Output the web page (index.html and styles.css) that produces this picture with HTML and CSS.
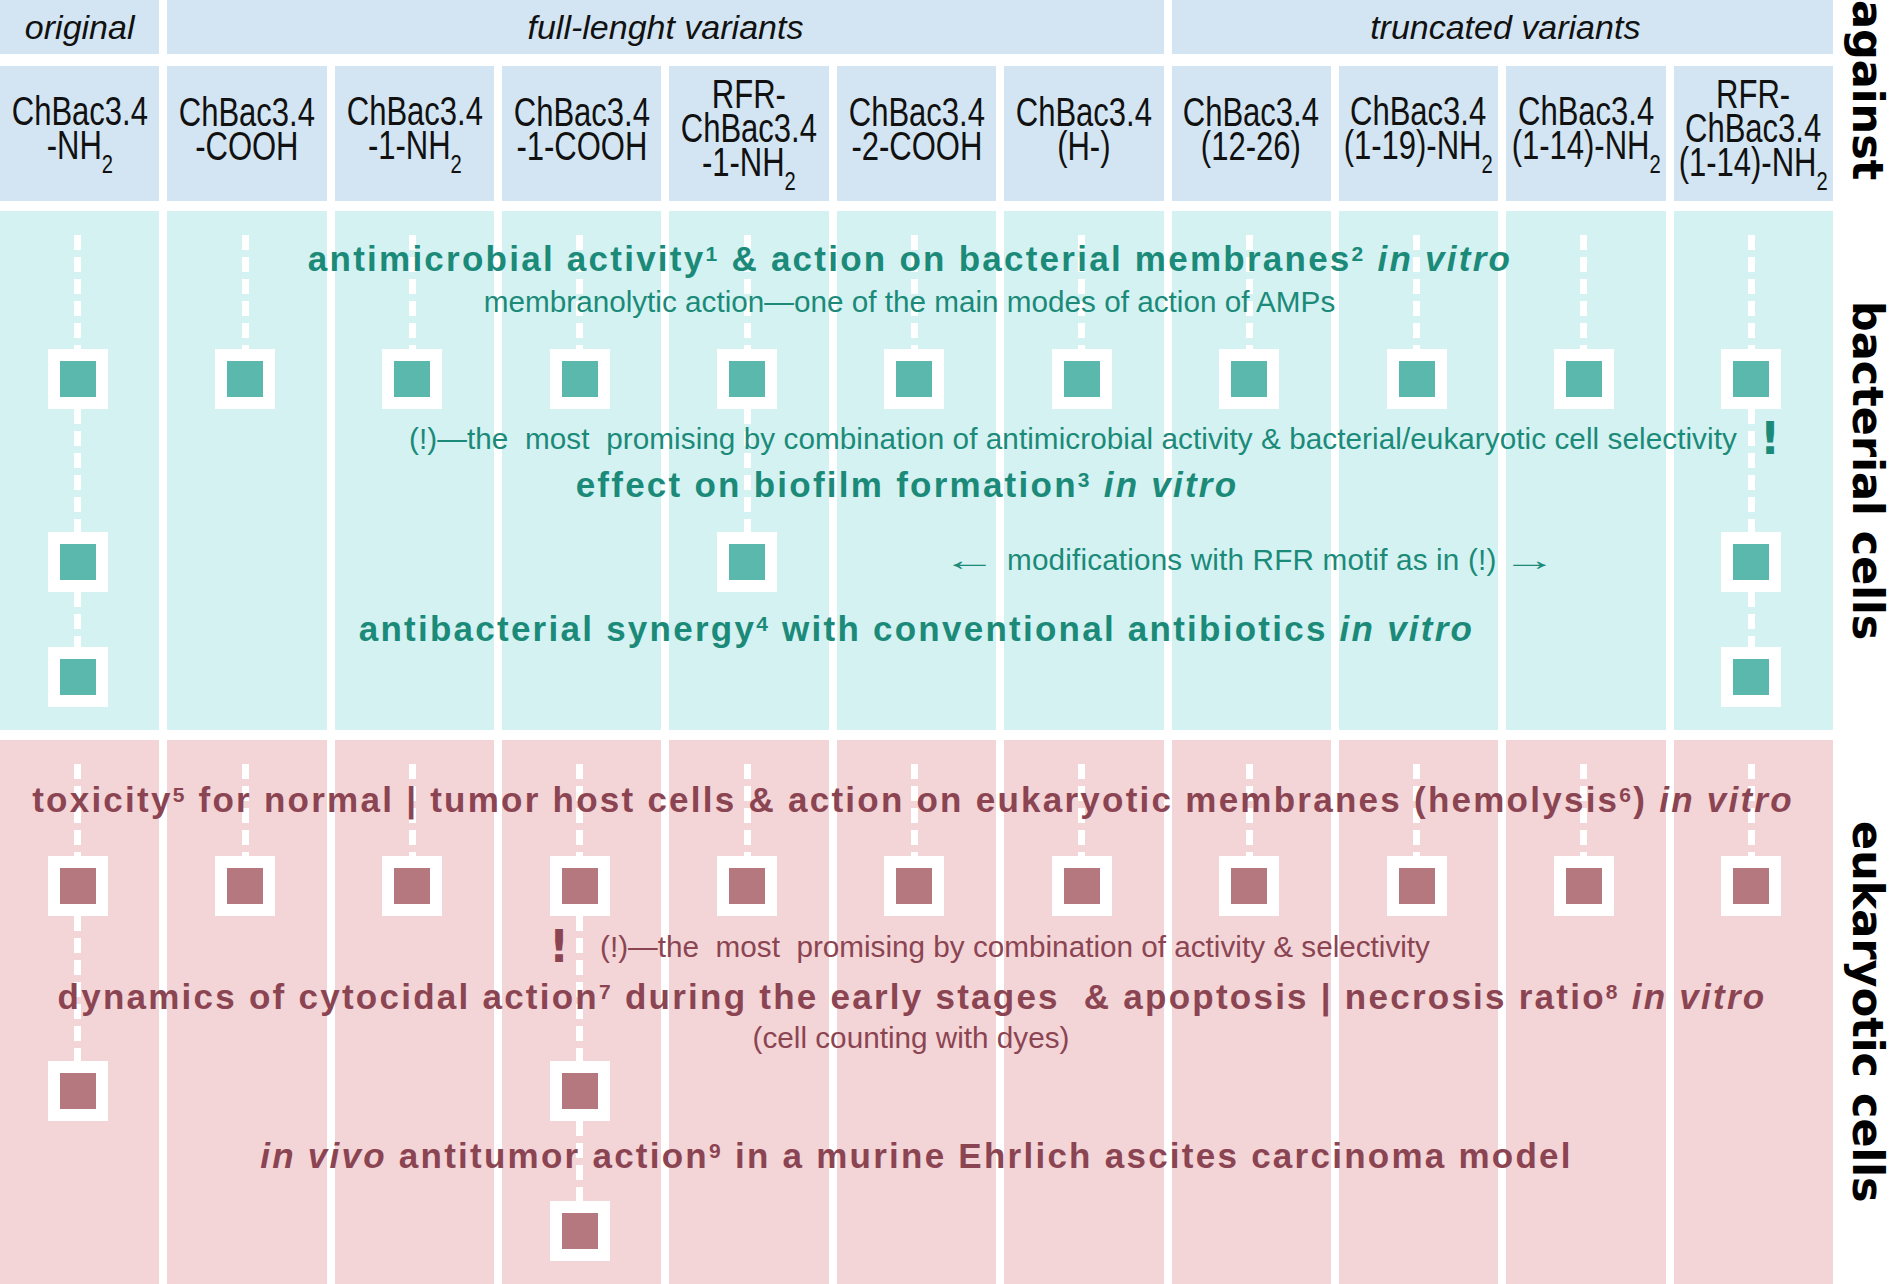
FILE: index.html
```html
<!DOCTYPE html>
<html lang="en">
<head>
<meta charset="utf-8">
<title>ChBac3.4 variants</title>
<link rel="stylesheet" href="styles.css">
</head>
<body>
<div class="figure">
  <div class="head">
    <div class="hdr1">
      <div class="hcell">original</div>
      <div class="hcell span6">full-lenght variants</div>
      <div class="hcell span4">truncated variants</div>
    </div>
    <div class="hdr2">
      <div class="pcell"><span>ChBac3.4<br>-NH<sub>2</sub></span></div>
      <div class="pcell"><span>ChBac3.4<br>-COOH</span></div>
      <div class="pcell"><span>ChBac3.4<br>-1-NH<sub>2</sub></span></div>
      <div class="pcell"><span>ChBac3.4<br>-1-COOH</span></div>
      <div class="pcell"><span>RFR-<br>ChBac3.4<br>-1-NH<sub>2</sub></span></div>
      <div class="pcell"><span>ChBac3.4<br>-2-COOH</span></div>
      <div class="pcell"><span>ChBac3.4<br>(H-)</span></div>
      <div class="pcell"><span>ChBac3.4<br>(12-26)</span></div>
      <div class="pcell"><span>ChBac3.4<br>(1-19)-NH<sub>2</sub></span></div>
      <div class="pcell"><span>ChBac3.4<br>(1-14)-NH<sub>2</sub></span></div>
      <div class="pcell"><span>RFR-<br>ChBac3.4<br>(1-14)-NH<sub>2</sub></span></div>
    </div>
  </div>
  <div class="side side-head"><span class="vlabel">against</span></div>

  <section class="panel teal">
    <div class="stripes"><div></div><div></div><div></div><div></div><div></div><div></div><div></div><div></div><div></div><div></div><div></div></div>
    <div class="tracks">
      <div class="track"><i class="dash lead"></i><b class="node"></b><i class="dash link1"></i><b class="node"></b><i class="dash link2"></i><b class="node"></b></div>
      <div class="track"><i class="dash lead"></i><b class="node"></b></div>
      <div class="track"><i class="dash lead"></i><b class="node"></b></div>
      <div class="track"><i class="dash lead"></i><b class="node"></b></div>
      <div class="track"><i class="dash lead"></i><b class="node"></b><i class="dash link1"></i><b class="node"></b></div>
      <div class="track"><i class="dash lead"></i><b class="node"></b></div>
      <div class="track"><i class="dash lead"></i><b class="node"></b></div>
      <div class="track"><i class="dash lead"></i><b class="node"></b></div>
      <div class="track"><i class="dash lead"></i><b class="node"></b></div>
      <div class="track"><i class="dash lead"></i><b class="node"></b></div>
      <div class="track"><i class="dash lead"></i><b class="node"></b><i class="dash link1"></i><b class="node"></b><i class="dash link2"></i><b class="node"></b></div>
    </div>
    <div class="notes">
      <p class="big t1">antimicrobial activity<sup>1</sup> &amp; action on bacterial membranes<sup>2</sup> <em>in vitro</em></p>
      <p class="small t2">membranolytic action—one of the main modes of action of AMPs</p>
      <p class="small t3">(!)—the&nbsp; most&nbsp; promising by combination of antimicrobial activity &amp; bacterial/eukaryotic cell selectivity<span class="bang bang-after">!</span></p>
      <p class="big t4">effect on biofilm formation<sup>3</sup> <em>in vitro</em></p>
      <p class="small t5"><span class="arr arr-l">←</span>modifications with RFR motif as in (!)<span class="arr arr-r">→</span></p>
      <p class="big t6">antibacterial synergy<sup>4</sup> with conventional antibiotics <em>in vitro</em></p>
    </div>
  </section>
  <div class="side"><span class="vlabel">bacterial cells</span></div>

  <section class="panel pink">
    <div class="stripes"><div></div><div></div><div></div><div></div><div></div><div></div><div></div><div></div><div></div><div></div><div></div></div>
    <div class="tracks">
      <div class="track"><i class="dash lead"></i><b class="node"></b><i class="dash link1"></i><b class="node"></b></div>
      <div class="track"><i class="dash lead"></i><b class="node"></b></div>
      <div class="track"><i class="dash lead"></i><b class="node"></b></div>
      <div class="track"><i class="dash lead"></i><b class="node"></b><i class="dash link1"></i><b class="node"></b><i class="dash link2"></i><b class="node"></b></div>
      <div class="track"><i class="dash lead"></i><b class="node"></b></div>
      <div class="track"><i class="dash lead"></i><b class="node"></b></div>
      <div class="track"><i class="dash lead"></i><b class="node"></b></div>
      <div class="track"><i class="dash lead"></i><b class="node"></b></div>
      <div class="track"><i class="dash lead"></i><b class="node"></b></div>
      <div class="track"><i class="dash lead"></i><b class="node"></b></div>
      <div class="track"><i class="dash lead"></i><b class="node"></b></div>
    </div>
    <div class="notes">
      <p class="big p1">toxicity<sup>5</sup> for normal | tumor host cells &amp; action on eukaryotic membranes (hemolysis<sup>6</sup>) <em>in vitro</em></p>
      <p class="small p2"><span class="bang bang-before">!</span>(!)—the&nbsp; most&nbsp; promising by combination of activity &amp; selectivity</p>
      <p class="big p3">dynamics of cytocidal action<sup>7</sup> during the early stages&nbsp; &amp; apoptosis | necrosis ratio<sup>8</sup> <em>in vitro</em></p>
      <p class="small p4">(cell counting with dyes)</p>
      <p class="big p5"><em>in vivo</em> antitumor action<sup>9</sup> in a murine Ehrlich ascites carcinoma model</p>
    </div>
  </section>
  <div class="side"><span class="vlabel">eukaryotic cells</span></div>
</div>
</body>
</html>
```

FILE: styles.css
```css
* { box-sizing: border-box; }

html, body {
  margin: 0;
  padding: 0;
  background: #ffffff;
}

body {
  width: 1890px;
  height: 1284px;
  overflow: hidden;
  font-family: "Liberation Sans", Arial, sans-serif;
  color: #111;
}

p { margin: 0; }

.figure {
  display: grid;
  grid-template-columns: 1833px 57px;
  grid-template-rows: 201px 519px 544px;
  row-gap: 10px;
}

/* ---------- header ---------- */
.head {
  display: flex;
  flex-direction: column;
  gap: 12px;
  min-width: 0;
}

.hdr1,
.hdr2,
.stripes,
.tracks {
  display: grid;
  grid-template-columns: repeat(11, minmax(0, 1fr));
  column-gap: 8px;
}

.hdr1 { height: 54px; }

.hcell {
  background: #d3e5f2;
  display: flex;
  align-items: center;
  justify-content: center;
  font-style: italic;
  font-size: 34px;
  color: #111;
}

.span6 { grid-column: span 6; }
.span4 { grid-column: span 4; padding-left: 6px; }

.hdr2 { height: 135px; }

.pcell {
  background: #d3e5f2;
  display: flex;
  align-items: center;
  justify-content: center;
  padding-bottom: 9px;
  min-width: 0;
  overflow: visible;
}

.pcell > span {
  display: inline-block;
  text-align: center;
  font-size: 40px;
  line-height: 34px;
  white-space: nowrap;
  color: #111;
  transform: scaleX(0.775);
}

.pcell sub {
  font-size: 26px;
  line-height: 0;
  vertical-align: -14px;
}

/* ---------- side labels ---------- */
.side {
  display: flex;
  align-items: center;
  justify-content: center;
  min-width: 0;
  padding-left: 12px;
}

.side-head { padding-bottom: 20px; }

.vlabel {
  writing-mode: vertical-rl;
  font-family: "DejaVu Sans", sans-serif;
  font-weight: bold;
  font-size: 43px;
  line-height: 57px;
  color: #000;
  white-space: nowrap;
}

/* ---------- panels ---------- */
.panel {
  display: grid;
  overflow: hidden;
  min-width: 0;
}

.panel > * { grid-area: 1 / 1; min-width: 0; }

.teal .stripes > div { background: #d4f2f2; }
.pink .stripes > div { background: #f3d4d7; }

.track {
  display: flex;
  flex-direction: column;
  align-items: center;
  padding-top: 24px;
  padding-right: 4px;
}

.dash {
  display: block;
  width: 7px;
  flex: none;
  background: repeating-linear-gradient(to bottom, #ffffff 0 15px, transparent 15px 22px);
}

.node {
  display: block;
  width: 60px;
  height: 60px;
  border: 12px solid #ffffff;
  flex: none;
}

.teal .node { background: #5bb8ad; }
.pink .node { background: #b5787e; }

.teal .lead { height: 114px; }
.teal .link1 { height: 123px; }
.teal .link2 { height: 55px; }

.pink .lead { height: 92px; }
.pink .link1 { height: 145px; }
.pink .link2 { height: 80px; }

/* ---------- notes ---------- */
.notes {
  display: flex;
  flex-direction: column;
  position: relative;
  z-index: 2;
}

.teal .notes { color: #1b8a79; }
.pink .notes { color: #8b4552; }

.big {
  white-space: nowrap;
  font-weight: bold;
  font-size: 35px;
  letter-spacing: 2.25px;
  line-height: 40px;
  text-align: center;
}

.small {
  white-space: nowrap;
  font-size: 29.7px;
  line-height: 34px;
  text-align: center;
}

.notes sup {
  font-size: 0.6em;
  line-height: 0;
  vertical-align: 0.5em;
}

.notes em { font-style: italic; }

.bang {
  display: inline-block;
  font-family: "DejaVu Sans", sans-serif;
  font-weight: bold;
  font-size: 44px;
  line-height: 34px;
  vertical-align: top;
  letter-spacing: 0;
}

.bang-after { margin-left: 23px; }
.bang-before { margin-right: 31px; }

.arr {
  display: inline-block;
  width: 34px;
  transform: scaleX(1.85);
  transform-origin: 0 50%;
  letter-spacing: 0;
}

.arr-l { margin-right: 31px; }
.arr-r { margin-left: 6px; }

/* teal positions */
.t1 { margin-top: 28px; padding-right: 13px; }
.t2 { margin-top: 6px; padding-right: 14px; }
.t3 { margin-top: 103px; text-align: left; padding-left: 409px; letter-spacing: 0.06px; }
.t4 { margin-top: 9px; padding-right: 19px; }
.t5 { margin-top: 38px; text-align: left; padding-left: 942px; letter-spacing: 0.16px; }
.t6 { margin-top: 32px; }

/* pink positions */
.p1 { margin-top: 40px; padding-right: 7px; }
.p2 { margin-top: 110px; text-align: left; padding-left: 549px; }
.p3 { margin-top: 13px; padding-right: 9px; }
.p4 { margin-top: 4px; padding-right: 11px; }
.p5 { margin-top: 81px; }
```
